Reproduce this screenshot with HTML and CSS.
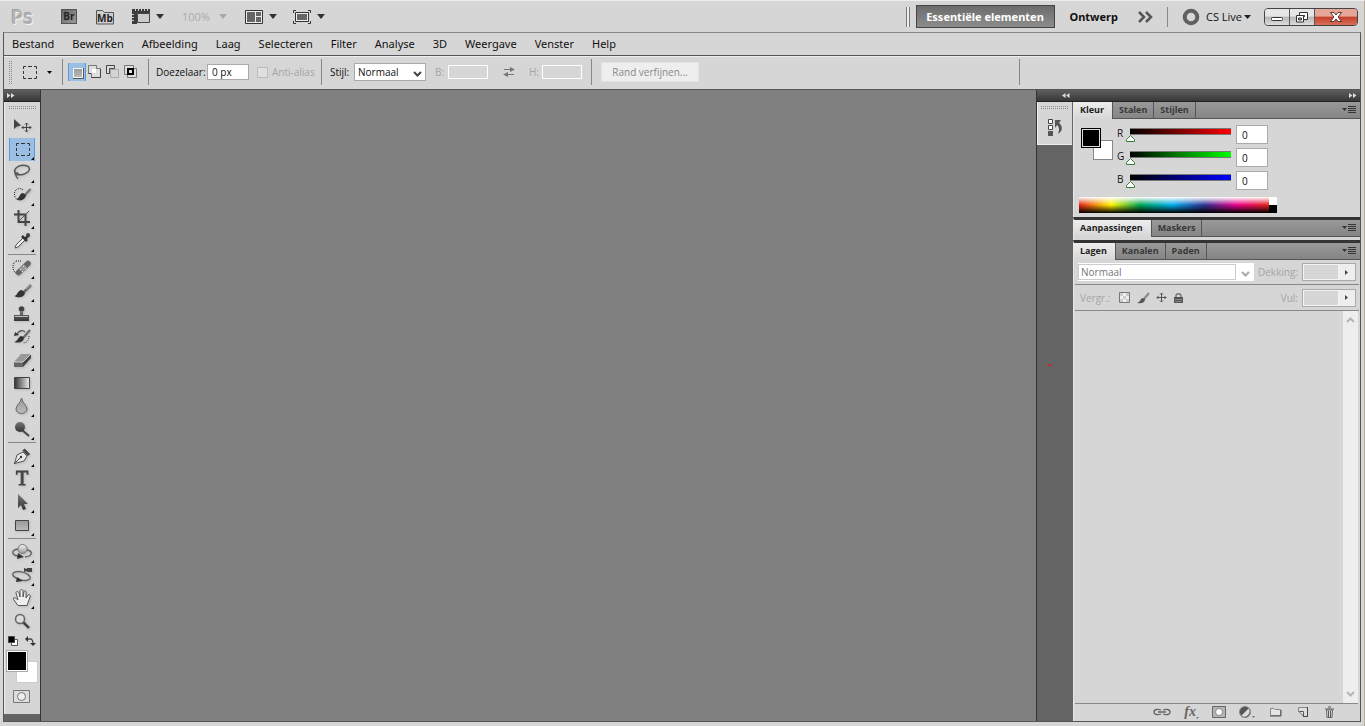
FILE: index.html
```html
<!DOCTYPE html>
<html lang="nl">
<head>
<meta charset="utf-8">
<title>Photoshop</title>
<link rel="stylesheet" href="styles.css">
</head>
<body>
<svg class="defs" aria-hidden="true">
  <defs>
    <linearGradient id="metal" x1="0" y1="0" x2="0" y2="1"><stop offset="0" stop-color="#777"/><stop offset="1" stop-color="#333"/></linearGradient>
    <linearGradient id="silver" x1="0" y1="0" x2="0" y2="1"><stop offset="0" stop-color="#f4f4f4"/><stop offset="1" stop-color="#9a9a9a"/></linearGradient>
    <linearGradient id="plate" x1="0" y1="0" x2="0" y2="1"><stop offset="0" stop-color="#999"/><stop offset="1" stop-color="#bbb"/></linearGradient>
    <linearGradient id="fade" x1="0" y1="0" x2="1" y2="0"><stop offset="0" stop-color="#333"/><stop offset="1" stop-color="#eee"/></linearGradient>
    <pattern id="dots" width="2" height="2" patternUnits="userSpaceOnUse"><path d="M0 0H1V1H0Z" fill="#8c8c8c"/></pattern>
  </defs>
</svg>

<header class="titlebar">
  <span class="logo">Ps</span>
  <button class="app-button bridge" aria-label="Bridge">Br</button>
  <button class="app-button mini" aria-label="Mini Bridge"><svg width="20" height="16" viewBox="0 0 20 16"><path d="M1.500 15V1.500H7.500L9.500 3.500H18.500V15Z" fill="#cfcfcf" stroke="#555"/></svg><span>Mb</span></button>
  <button class="icon-menu extras" aria-label="Extra's weergeven">
    <svg width="19" height="17" viewBox="0 0 19 17"><path d="M0 1H18V5H5V16H0Z" fill="#3c3c3c"/><path d="M3.500 1V3M6.500 1V3M9.500 1V3M12.500 1V3M15.500 1V3M0 6.500H2M0 9.500H2M0 12.500H2" stroke="#ccc"/><path d="M5.500 5.500H17.500V14.500H5.500Z" fill="#ccc" stroke="#444"/></svg>
    <svg class="caret" width="8" height="5" viewBox="0 0 8 5"><path d="M0 0H8L4 5Z" fill="#333"/></svg>
  </button>
  <button class="icon-menu zoom-level" disabled>100%
    <svg class="caret" width="8" height="5" viewBox="0 0 8 5"><path d="M0 0H8L4 5Z" fill="#aaa"/></svg>
  </button>
  <button class="icon-menu arrange" aria-label="Documenten schikken">
    <svg width="19" height="16" viewBox="0 0 19 16"><path d="M.5 1.500H17.500V14.500H.5Z" fill="#eee" stroke="#333"/><path d="M2 3H10V13H2ZM11 3H16V7H11ZM11 8H16V13H11Z" fill="#666"/></svg>
    <svg class="caret" width="8" height="5" viewBox="0 0 8 5"><path d="M0 0H8L4 5Z" fill="#333"/></svg>
  </button>
  <button class="icon-menu screen" aria-label="Schermmodus">
    <svg width="19" height="16" viewBox="0 0 19 16"><path d="M.5 4V1.500H3M15 1.500H17.500V4M.5 12V14.500H3M15 14.500H17.500V12" fill="none" stroke="#333"/><path d="M2.500 3.500H15.500V12.500H2.500Z" fill="#eee" stroke="#333"/><path d="M4 5H14V11H4Z" fill="#666"/></svg>
    <svg class="caret" width="8" height="5" viewBox="0 0 8 5"><path d="M0 0H8L4 5Z" fill="#333"/></svg>
  </button>
  <span class="spacer"></span>
  <span class="double-line"></span>
  <button class="workspace active">Essentiële elementen</button>
  <button class="workspace">Ontwerp</button>
  <button class="more" aria-label="Meer werkruimten"><svg width="15" height="12" viewBox="0 0 15 12"><path d="M1 1L6 6L1 11M8 1L13 6L8 11" fill="none" stroke="#555" stroke-width="2.500"/></svg></button>
  <span class="title-rule"></span>
  <button class="cs-live"><svg width="18" height="18" viewBox="0 0 18 18"><circle cx="9" cy="9" r="6.300" fill="none" stroke="#606060" stroke-width="4"/></svg><span>CS Live</span><svg width="7" height="4" viewBox="0 0 7 4"><path d="M0 0H7L3.500 4Z" fill="#222"/></svg></button>
  <div class="window-buttons">
    <button class="win" aria-label="Minimaliseren"><svg width="14" height="12" viewBox="0 0 14 12"><rect x="1.500" y="6.500" width="11" height="3" rx="1" fill="#fff" stroke="#333"/></svg></button>
    <button class="win" aria-label="Vorig formaat"><svg width="14" height="12" viewBox="0 0 14 12"><path d="M4.500 1.500H12.500V8.500H4.500Z" fill="#fff" stroke="#333"/><path d="M7 4H10V6H7Z" fill="#555"/><path d="M1.500 4.500H8.500V11H1.500Z" fill="#fff" stroke="#333"/><path d="M3.500 7H6.500V9H3.500Z" fill="#aaa" stroke="#333"/></svg></button>
    <button class="win close" aria-label="Sluiten"><svg width="14" height="12" viewBox="0 0 14 12"><path d="M1.500 1.500H5L7 4L9 1.500H12.500L9.200 6L12.500 10.500H9L7 8L5 10.500H1.500L4.800 6Z" fill="#fff" stroke="#533"/></svg></button>
  </div>
</header>

<div class="frame">
  <nav class="menubar">
    <button>Bestand</button><button>Bewerken</button><button>Afbeelding</button><button>Laag</button><button>Selecteren</button><button>Filter</button><button>Analyse</button><button>3D</button><button>Weergave</button><button>Venster</button><button>Help</button>
  </nav>

  <div class="options">
    <div class="group current">
      <svg class="grip-v" width="3" height="23"><rect width="3" height="23" fill="url(#dots)"/></svg>
      <button class="preset" aria-label="Rechthoekig selectiekader"><svg width="16" height="15" viewBox="0 0 16 15"><path d="M1.500 4V1.500H4M6 1.500H10M12 1.500H14.500V4M14.500 6V9M14.500 11V13.500H12M10 13.500H6M4 13.500H1.500V11M1.500 9V6" fill="none" stroke="#333"/></svg><svg width="5" height="3" viewBox="0 0 5 3"><path d="M0 0H5L2.500 3Z" fill="#000"/></svg></button>
    </div>
    <div class="group modes">
      <button class="mode selected" aria-label="Nieuwe selectie"><svg width="16" height="16" viewBox="0 0 16 16"><path d="M4.500 4.500H13.500V13.500H4.500Z" fill="url(#plate)" stroke="#f5f5f5"/><path d="M4 14.500H14.500V4" fill="none" stroke="#555"/></svg></button>
      <button class="mode" aria-label="Toevoegen"><svg width="16" height="16" viewBox="0 0 16 16"><path d="M1.500 1.500H9.500V4.500H13.500V13.500H4.500V9.500H1.500Z" fill="#ddd" stroke="#777"/><path d="M4 9.500H1.500M4.500 13.500H13.500V5" fill="none" stroke="#444"/><path d="M5 5H9V9H5Z" fill="#fff"/></svg></button>
      <button class="mode" aria-label="Verwijderen"><svg width="16" height="16" viewBox="0 0 16 16"><path d="M5.500 5.500H13.500V13.500H5.500Z" fill="#d4d4d4" stroke="#aaa"/><path d="M9.500 1.500H1.500V9.500H4.500V4.500H9.500Z" fill="#ddd" stroke="#444"/></svg></button>
      <button class="mode" aria-label="Doorsnede"><svg width="16" height="16" viewBox="0 0 16 16"><path d="M1.500 1.500H10.500V10.500H1.500ZM4.500 4.500H13.500V13.500H4.500Z" fill="#ddd" stroke="#777"/><path d="M5 5H10V10H5Z" fill="#ddd" stroke="#000" stroke-width="2"/></svg></button>
    </div>
    <div class="group feather">
      <label class="lab-feather" for="feather">Doezelaar:</label>
      <input class="box feather-box" id="feather" type="text" value="0 px">
      <label class="alias"><input type="checkbox" disabled>Anti-alias</label>
    </div>
    <div class="group style">
      <label class="lab-style" for="style">Stijl:</label>
      <span class="select-wrap style-select"><select id="style"><option>Normaal</option></select><svg width="9" height="6" viewBox="0 0 9 6"><path d="M1 1L4.500 4.500L8 1" fill="none" stroke="#444" stroke-width="2"/></svg></span>
      <label class="lab-dim" for="w">B:</label><input class="box dim" id="w" type="text" disabled>
      <button class="swap" disabled aria-label="Wisselen"><svg width="14" height="12" viewBox="0 0 14 12"><path d="M2 3.500H9M12 8.500H5" stroke="#777"/><path d="M8 1L13 3.500L8 6ZM6 6V11L1 8.500Z" fill="#777"/></svg></button>
      <label class="lab-dim" for="h">H:</label><input class="box dim" id="h" type="text" disabled>
    </div>
    <div class="group refine"><button class="refine-button" disabled>Rand verfijnen...</button></div>
  </div>

  <main class="work">
    <aside class="toolbar">
      <div class="dark-head"><svg width="8" height="5" viewBox="0 0 8 5"><path d="M0 0L3.500 2.500L0 5ZM4 0L7.500 2.500L4 5Z" fill="#ddd"/></svg></div>
      <div class="tools">
        <svg class="grip-h" width="28" height="3"><rect width="28" height="3" fill="url(#dots)"/></svg>
        <button class="tool plain" aria-label="Verplaatsen"><svg viewBox="0 0 26 23"><path d="M5 4V14L8 11.500L12 10.500Z" fill="#444"/><path d="M17.500 8V17M13 12.500H22M16 9.500L17.500 8L19 9.500M16 15.500L17.500 17L19 15.500M14.500 11L13 12.500L14.500 14M20.500 11L22 12.500L20.500 14" fill="none" stroke="#444"/></svg></button>
        <button class="tool selected" aria-label="Selectiekader"><svg viewBox="0 0 26 23"><path d="M7.500 8V5.500H10M12 5.500H16M18 5.500H20.500V8M20.500 10V13M20.500 15V17.500H18M16 17.500H12M10 17.500H7.500V15M7.500 13V10" fill="none" stroke="#333"/></svg></button>
        <button class="tool" aria-label="Lasso"><svg viewBox="0 0 26 23"><ellipse cx="13" cy="9" rx="7.500" ry="4.500" transform="rotate(-12 13 9)" fill="none" stroke="#555" stroke-width="1.500"/><path d="M7 11C4 14 9 15 9 13S6 12 7 15L9 18" fill="none" stroke="#555" stroke-width="1.300"/></svg></button>
        <button class="tool" aria-label="Snelle selectie"><svg viewBox="0 0 26 23"><path d="M14 6C11 3 6 5 5.500 9S7 16 11 16" fill="none" stroke="#222" stroke-dasharray="1 1"/><path d="M21.500 5L15 12" stroke="#777" stroke-width="2.500"/><path d="M17 11C16 17 10 17 7 15C11 15 10 9 14 9Z" fill="#333"/></svg></button>
        <button class="tool" aria-label="Uitsnijden"><svg viewBox="0 0 26 23"><path d="M9.500 3V15H21M5 7.500H16.500V19" fill="none" stroke="#444" stroke-width="2"/><path d="M10 14L20 4" stroke="#555"/></svg></button>
        <button class="tool" aria-label="Pipet"><svg viewBox="0 0 26 23"><path d="M6 18L7 15L14 8L16 10L9 17Z" fill="#eee" stroke="#555"/><path d="M13 6L18 11M16 9L20 5" stroke="#333" stroke-width="2.500"/><circle cx="19" cy="5" r="2" fill="#444"/></svg></button>
        <hr>
        <button class="tool" aria-label="Retoucheerpenseel"><svg viewBox="0 0 26 23"><path d="M12 4H7C3 6 3 14 7 16" fill="none" stroke="#222" stroke-dasharray="1 1"/><path d="M9.500 15.500L19 6.500" stroke="#666" stroke-width="5.500" stroke-linecap="round"/><path d="M11.500 13.500L16.500 9" stroke="#999" stroke-width="5"/><path d="M11 12.500H12M13 14.500H14M14 9.500H15M16 11.500H17" stroke="#ddd"/></svg></button>
        <button class="tool" aria-label="Penseel"><svg viewBox="0 0 26 23"><path d="M22 5L14 13" stroke="#666" stroke-width="2.500"/><path d="M22 5L17 9" stroke="#aaa"/><path d="M16 13C15 18 9 18 5 16C9 16 8 10 13 10Z" fill="#333"/></svg></button>
        <button class="tool" aria-label="Stempel"><svg viewBox="0 0 26 23"><circle cx="12.500" cy="6" r="2.800" fill="#444"/><path d="M11 8H14V12H20V18H5V12H11Z" fill="url(#metal)"/><path d="M6 13.500H19" stroke="#bbb"/></svg></button>
        <button class="tool" aria-label="Historiepenseel"><svg viewBox="0 0 26 23"><path d="M8 8C10 4 14 4 16 6" fill="none" stroke="#555" stroke-width="1.300"/><path d="M6 6L10 9L5 10Z" fill="#333"/><path d="M20 10C20 14 18 17 14 17" fill="none" stroke="#333" stroke-dasharray="1 1"/><path d="M21 4L14 12" stroke="#666" stroke-width="2"/><path d="M15 12C14 17 9 17 5 16C9 15 9 10 13 10Z" fill="#333"/></svg></button>
        <button class="tool" aria-label="Gummetje"><svg viewBox="0 0 26 23"><path d="M5 13L12 5H22L15 13Z" fill="#999"/><path d="M14 13L22 5V9L14 18Z" fill="#444"/><path d="M5 13H14V18H5Z" fill="#666"/><path d="M5 13H14L22 5" fill="none" stroke="#ccc"/></svg></button>
        <button class="tool" aria-label="Verloop"><svg viewBox="0 0 26 23"><path d="M5.500 5.500H20.500V16.500H5.500Z" fill="url(#fade)" stroke="#444"/></svg></button>
        <button class="tool" aria-label="Vervagen"><svg viewBox="0 0 26 23"><path d="M12.500 3C13 8 18 10 18 14C18 20 7 20 7 14C7 10 12 8 12.500 3Z" fill="url(#plate)" stroke="#666"/></svg></button>
        <button class="tool" aria-label="Tegenhouden"><svg viewBox="0 0 26 23"><path d="M13 12L20 18" stroke="#444" stroke-width="2"/><circle cx="11" cy="9" r="5" fill="url(#metal)"/></svg></button>
        <hr>
        <button class="tool" aria-label="Pen"><svg viewBox="0 0 26 23"><path d="M5.500 18.500L8 10L14 7L18 11L15 16Z" fill="#e8e8e8" stroke="#555"/><path d="M5 19L11 13" stroke="#444"/><circle cx="12" cy="12" r="1.200" fill="#333"/><path d="M14.500 4.500L20 10" stroke="#444" stroke-width="3"/></svg></button>
        <button class="tool type" aria-label="Tekst">T</button>
        <button class="tool" aria-label="Padselectie"><svg viewBox="0 0 26 23"><path d="M9 3V17L12 14L14 19L17 18L15 13H19Z" fill="url(#metal)"/></svg></button>
        <button class="tool" aria-label="Rechthoek"><svg viewBox="0 0 26 23"><path d="M6.500 6.500H19.500V16.500H6.500Z" fill="url(#plate)" stroke="#444"/></svg></button>
        <hr>
        <button class="tool" aria-label="3D roteren"><svg viewBox="0 0 26 23"><path d="M9 8C2 9 2 14 9 15M16 16C24 15 24 10 18 9" fill="none" stroke="#666" stroke-width="1.500"/><path d="M9 12L15 16L8 18Z" fill="#333"/><circle cx="13.500" cy="8" r="4.500" fill="url(#silver)" stroke="#777"/></svg></button>
        <button class="tool" aria-label="3D camera"><svg viewBox="0 0 26 23"><ellipse cx="12.500" cy="12" rx="9" ry="4" transform="rotate(14 12.500 12)" fill="none" stroke="#666" stroke-width="1.500"/><path d="M8 13L14 17L7 18Z" fill="#333"/><path d="M15 4L18 5V4H23V8H18V7L15 8Z" fill="#444"/></svg></button>
        <button class="tool" aria-label="Handje"><svg viewBox="0 0 26 23"><path d="M9 18.500L5 13C3 10 6 10 9 13L7 6C7 4 9 4 10 6L11 10V4C11 2 14 2 14 4V10L15 5C16 3 18 4 17 6L17 11L19 8C20 7 22 8 21 10L18 18.500Z" fill="#eee" stroke="#555"/></svg></button>
        <button class="tool plain" aria-label="Zoomen"><svg viewBox="0 0 26 23"><path d="M14 12L20 18" stroke="#444" stroke-width="2.500"/><circle cx="11" cy="9" r="4.500" fill="#ddd" stroke="#666" stroke-width="1.500"/></svg></button>
        <div class="mini-row">
          <button aria-label="Standaardkleuren"><svg width="11" height="11" viewBox="0 0 11 11"><path d="M3.500 3.500H9.500V9.500H3.500Z" fill="#fff" stroke="#555"/><path d="M.5 .5H6.500V6.500H.5Z" fill="#000" stroke="#444"/></svg></button>
          <button aria-label="Kleuren omwisselen"><svg width="11" height="11" viewBox="0 0 11 11"><path d="M2 3H5C7 3 8 4 8 8" fill="none" stroke="#444" stroke-width="1.300"/><path d="M0 3L3 0V6ZM5 7H11L8 10Z" fill="#333"/></svg></button>
        </div>
        <div class="swatches"><button class="back" aria-label="Achtergrondkleur"></button><button class="front" aria-label="Voorgrondkleur"></button></div>
        <button class="mask" aria-label="Snelmasker"><svg width="17" height="13" viewBox="0 0 17 13"><path d="M.5 .5H16.500V12.500H.5Z" fill="#ddd" stroke="#777"/><circle cx="8.500" cy="6.500" r="4" fill="#eee" stroke="#777"/></svg></button>
      </div>
    </aside>

    <section class="canvas"></section>

    <aside class="dock">
      <div class="dock-head"><svg width="8" height="5" viewBox="0 0 8 5"><path d="M3.500 0L0 2.500L3.500 5ZM7.500 0L4 2.500L7.500 5Z" fill="#ddd"/></svg><svg width="8" height="5" viewBox="0 0 8 5"><path d="M0 0L3.500 2.500L0 5ZM4 0L7.500 2.500L4 5Z" fill="#ddd"/></svg></div>
      <div class="dock-body">
        <div class="icon-column">
          <div class="icon-panel"><svg class="grip-h" width="28" height="3"><rect width="28" height="3" fill="url(#dots)"/></svg><button aria-label="Historie"><svg width="17" height="19" viewBox="0 0 17 19"><path d="M1.500 1.500H5.500V5.500H1.500ZM1.500 7.500H5.500V11.500H1.500Z" fill="#fff" stroke="#444"/><path d="M1 13H6V18H1Z" fill="#555"/><path d="M8 2H14L12 5C16 8 16 13 11 16C13 11 12 9 10 7L8 10Z" fill="#555"/></svg></button></div>
          <svg class="red-dot" width="3" height="2" viewBox="0 0 3 2"><path d="M0 0H3V2H0Z" fill="#d22"/></svg>
        </div>
        <div class="panels">
          <section class="panel color-panel">
            <div class="tabs"><button class="tab on">Kleur</button><button class="tab">Stalen</button><button class="tab">Stijlen</button><button class="panel-menu" aria-label="Menu"><svg width="14" height="8" viewBox="0 0 14 8"><path d="M0 2H5L2.500 5Z" fill="#333"/><path d="M6 .5H14M6 2.500H14M6 4.500H14M6 6.500H14" stroke="#333"/></svg></button></div>
            <div class="color-body">
              <div class="mixer">
                <div class="pair"><button class="pair-back" aria-label="Achtergrond"></button><button class="pair-front" aria-label="Voorgrond"></button></div>
                <div class="channels">
                  <label for="r">R</label><input class="range red" id="r" type="range" min="0" max="255" value="0"><input class="value" type="text" value="0" aria-label="R-waarde">
                  <label for="g">G</label><input class="range green" id="g" type="range" min="0" max="255" value="0"><input class="value" type="text" value="0" aria-label="G-waarde">
                  <label for="b">B</label><input class="range blue" id="b" type="range" min="0" max="255" value="0"><input class="value" type="text" value="0" aria-label="B-waarde">
                </div>
              </div>
              <div class="ramp"><span class="spectrum"></span><span class="mono"></span></div>
            </div>
          </section>
          <section class="panel">
            <div class="tabs"><button class="tab on">Aanpassingen</button><button class="tab">Maskers</button><button class="panel-menu" aria-label="Menu"><svg width="14" height="8" viewBox="0 0 14 8"><path d="M0 2H5L2.500 5Z" fill="#333"/><path d="M6 .5H14M6 2.500H14M6 4.500H14M6 6.500H14" stroke="#333"/></svg></button></div>
            <div class="collapsed"></div>
          </section>
          <section class="panel layers">
            <div class="tabs"><button class="tab on">Lagen</button><button class="tab">Kanalen</button><button class="tab">Paden</button><button class="panel-menu" aria-label="Menu"><svg width="14" height="8" viewBox="0 0 14 8"><path d="M0 2H5L2.500 5Z" fill="#333"/><path d="M6 .5H14M6 2.500H14M6 4.500H14M6 6.500H14" stroke="#333"/></svg></button></div>
            <div class="layer-row">
              <span class="select-wrap blend"><select disabled aria-label="Overvloeimodus"><option>Normaal</option></select><svg width="9" height="6" viewBox="0 0 9 6"><path d="M1 1L4.500 4.500L8 1" fill="none" stroke="#aaa" stroke-width="2"/></svg></span>
              <label class="faint" for="opacity">Dekking:</label>
              <span class="stepper"><input id="opacity" type="text" disabled><button disabled aria-label="Dekking kiezen"><svg width="4" height="7" viewBox="0 0 4 7"><path d="M0 1L3 3.500L0 6Z" fill="#444"/></svg></button></span>
            </div>
            <div class="layer-row">
              <span class="faint lock-label">Vergr.:</span>
              <button class="lock" disabled aria-label="Transparantie"><svg width="12" height="12" viewBox="0 0 12 12"><path d="M.5 .5H10.500V10.500H.5Z" fill="#eee" stroke="#777"/><path d="M1 1H4V4H1ZM7 1H10V4H7ZM4 4H7V7H4ZM1 7H4V10H1ZM7 7H10V10H7Z" fill="#ccc"/></svg></button>
              <button class="lock" disabled aria-label="Pixels"><svg width="13" height="12" viewBox="0 0 13 12"><path d="M12 1L7 7" stroke="#888" stroke-width="2"/><path d="M8 7C8 11 4 12 0 11C4 10 3 6 6 6Z" fill="#555"/></svg></button>
              <button class="lock" disabled aria-label="Positie"><svg width="11" height="11" viewBox="0 0 11 11"><path d="M5.500 1V10M1 5.500H10M4 2.500L5.500 1L7 2.500M4 8.500L5.500 10L7 8.500M2.500 4L1 5.500L2.500 7M8.500 4L10 5.500L8.500 7" fill="none" stroke="#555"/></svg></button>
              <button class="lock" disabled aria-label="Alles"><svg width="12" height="12" viewBox="0 0 12 12"><path d="M3 6V4C3 1 8 1 8 4V6" fill="none" stroke="#777" stroke-width="1.500"/><path d="M1 5H10V11H1Z" fill="#555"/><path d="M2 7.500H9M2 9.500H9" stroke="#888"/></svg></button>
              <label class="faint fill-label" for="fill">Vul:</label>
              <span class="stepper"><input id="fill" type="text" disabled><button disabled aria-label="Vulling kiezen"><svg width="4" height="7" viewBox="0 0 4 7"><path d="M0 1L3 3.500L0 6Z" fill="#444"/></svg></button></span>
            </div>
            <div class="layer-list"><div class="scroll"><svg width="9" height="6" viewBox="0 0 9 6"><path d="M1 5L4.500 1.500L8 5" fill="none" stroke="#b5b5b5" stroke-width="2"/></svg><svg width="9" height="6" viewBox="0 0 9 6"><path d="M1 1L4.500 4.500L8 1" fill="none" stroke="#b5b5b5" stroke-width="2"/></svg></div></div>
            <div class="layer-foot">
              <button aria-label="Koppelen"><svg width="18" height="12" viewBox="0 0 18 12"><path d="M8 4C5 3 1 3 1 6S5 9 8 8M10 4C13 3 17 3 17 6S13 9 10 8M5 6H13" fill="none" stroke="#666" stroke-width="1.300"/></svg></button>
              <button class="fx" aria-label="Laagstijl">fx<svg width="3" height="2" viewBox="0 0 3 2"><path d="M0 0H3L1.500 2Z" fill="#777"/></svg></button>
              <button aria-label="Laagmasker"><svg width="14" height="12" viewBox="0 0 14 12"><path d="M.5 .5H13.500V11.500H.5Z" fill="#b4b4b4" stroke="#666"/><circle cx="7" cy="6" r="3.500" fill="#fff" stroke="#888"/></svg></button>
              <button aria-label="Aanpassingslaag"><svg width="16" height="12" viewBox="0 0 16 12"><circle cx="6" cy="6" r="5.500" fill="#555" stroke="#888"/><path d="M2.500 9.500L9.500 2.500A5 5 0 0 1 2.500 9.500Z" fill="#ddd"/><path d="M13 10H16L14.500 12Z" fill="#777"/></svg></button>
              <button aria-label="Nieuwe groep"><svg width="12" height="12" viewBox="0 0 12 12"><path d="M.5 2.500H4L5 3.500H10.500V9.500H.5Z" fill="#e4e4e4" stroke="#888"/><path d="M0 10H11V4" fill="none" stroke="#555"/></svg></button>
              <button aria-label="Nieuwe laag"><svg width="12" height="12" viewBox="0 0 12 12"><path d="M1.500 6V1.500H10.500V10.500H6" fill="#ddd" stroke="#888"/><path d="M10.500 1V10.500H6" fill="none" stroke="#444"/><path d="M2.500 5.500H6.500V10L2.500 6Z" fill="#eee" stroke="#555"/></svg></button>
              <button aria-label="Verwijderen"><svg width="12" height="12" viewBox="0 0 12 12"><path d="M2.500 4H8.500L8 11.500H3Z" fill="#ddd" stroke="#666"/><path d="M1 3H10M4 1H7M4.500 5V11M6.500 5V11" stroke="#555"/></svg></button>
            </div>
          </section>
        </div>
      </div>
    </aside>
  </main>
</div>
</body>
</html>
```
FILE: styles.css
```css
* { box-sizing: border-box; }
html, body { height: 100%; }
body {
  margin: 0;
  display: flex;
  flex-direction: column;
  overflow: hidden;
  background: #d6d6d6;
  border-top: 1px solid #eee;
  border-right: 1px solid #b5ab96;
  font: 10px/14px "Open Sans", "Noto Sans", sans-serif;
  color: #111;
}
button, input, select { font: inherit; color: inherit; margin: 0; }
button { padding: 0; border: 0; background: none; display: block; flex: none; }
svg { display: block; flex: none; }
.defs { position: absolute; width: 0; height: 0; }

/* Title bar */
.titlebar { height: 31px; flex: none; display: flex; align-items: center; padding: 0 6px 0 11px; }
.logo { width: 50px; font: 600 20px/24px "Open Sans", sans-serif; color: #b4b4b4; text-shadow: 1px 1px 0 #f4f4f4, -1px -1px 0 #a0a0a0; }
.app-button { font-weight: 700; color: #222; }
.bridge { width: 16px; height: 15px; background: linear-gradient(135deg, #666, #999); border: 1px solid #555; line-height: 13px; }
.mini { display: grid; margin-left: 18px; place-items: center; }
.mini > * { grid-area: 1 / 1; }
.mini span { line-height: 14px; padding-top: 2px; }
.icon-menu { display: flex; align-items: center; gap: 5px; }
.extras { margin-left: 17px; }
.zoom-level { margin-left: 18px; width: 45px; justify-content: space-between; font-size: 11px; color: #aaa; }
.arrange { margin-left: 18px; }
.screen { margin-left: 16px; }
.spacer { flex: 1; }
.double-line { width: 4px; height: 20px; border: solid #777; border-width: 0 1px; background: #eee; margin-right: 6px; }
.workspace { height: 23px; padding: 0 8px; font: bold 11px/16px "Noto Sans", sans-serif; }
.workspace.active { width: 139px; padding: 0; color: #fff; background: linear-gradient(#6c6c6c, #8c8c8c); border: 1px solid #444; margin-right: 7px; }
.more { margin: 0 14px 0 12px; }
.title-rule { width: 1px; height: 20px; background: #888; margin-right: 14px; }
.cs-live { display: flex; align-items: center; gap: 2px; font-size: 11px; margin-right: 13px; }
.cs-live span { padding-left: 4px; }
.window-buttons { display: flex; border: 1px solid #444; border-radius: 4px; overflow: hidden; }
.win { width: 25px; height: 16px; display: grid; place-items: center; background: linear-gradient(#e6e6e6 45%, #b6b6b6 50%, #ddd); border-right: 1px solid #555; }
.win.close { width: 42px; border: 0; background: linear-gradient(#e5a698 45%, #c6402a 50%, #d87058); }

/* Frame and menu */
.frame { flex: 1; min-height: 0; display: flex; flex-direction: column; margin: 0 3px 4px 3px; border: 1px solid #555; border-top-color: #888; }
.menubar { height: 23px; flex: none; display: flex; align-items: center; gap: 18px; padding: 0 8px; border-bottom: 1px solid #555; font: 11px/16px "Noto Sans", sans-serif; }

/* Options bar */
.options { height: 34px; flex: none; display: flex; border-top: 1px solid #eee; border-bottom: 1px solid #555; padding-bottom: 2px; }
.group { display: flex; align-items: center; flex: none; position: relative; }
.group::after { content: ""; position: absolute; right: 0; top: 2px; bottom: 2px; border-right: 1px solid #888; }
.current { width: 59px; padding-left: 5px; }
.grip-v { margin-right: 10px; }
.preset { display: flex; align-items: center; gap: 9px; }
.modes { width: 86px; padding-left: 5px; }
.mode { width: 18px; height: 18px; display: grid; place-items: center; }
.mode.selected { background: #9bbfe4; border: solid #5a9ad8; border-width: 0 1px; }
.feather { width: 173px; padding-left: 7px; }
.lab-feather { width: 51px; white-space: nowrap; }
.box { height: 16px; padding: 0 4px; border: 1px solid #aaa; background: #fff; }
.feather-box { width: 42px; }
.alias { display: flex; align-items: center; gap: 4px; margin-left: 8px; color: #a5a5a5; }
.alias input { appearance: none; width: 11px; height: 11px; margin: 0; border: 1px solid #bbb; background: #e0e0e0; }
.style { width: 270px; padding-left: 8px; }
.lab-style { width: 24px; }
.select-wrap { display: grid; align-items: center; background: #fff; }
.select-wrap > * { grid-area: 1 / 1; }
.select-wrap select { appearance: none; width: 100%; height: 18px; border: 1px solid #aaa; border-radius: 0; padding: 0 3px; background: transparent; opacity: 1; }
.select-wrap svg { justify-self: end; margin-right: 4px; margin-top: 4px; pointer-events: none; }
.style-select { width: 72px; }
.lab-dim { width: 13px; margin-left: 9px; color: #a5a5a5; }
.box.dim { width: 40px; height: 14px; border-color: #fff; background: #d6d6d6; }
.swap { margin: 0 4px 0 14px; }
.refine { width: 428px; padding-left: 9px; }
.refine-button { width: 98px; height: 20px; background: #eee; border: 1px solid #e2e2e2; color: #888; }

/* Work area */
.work { flex: 1; min-height: 0; display: flex; background: #646464; }
.toolbar { width: 37px; flex: none; border-right: 1px solid #333; }
.dark-head, .dock-head { height: 12px; background: linear-gradient(#5e5e5e, #383838); border-bottom: 1px solid #222; display: flex; align-items: center; padding: 0 3px; }
.tools { background: #d6d6d6; border-left: 1px solid #eee; padding: 4px 3px 11px 4px; }
.grip-h { margin-bottom: 6px; }
.tool { width: 26px; height: 23px; position: relative; filter: drop-shadow(1px 1px 1px #bbb); }
.tool svg { width: 26px; height: 23px; }
.tool::after { content: ""; position: absolute; right: 1px; bottom: 1px; width: 3px; height: 3px; background: #000; clip-path: polygon(100% 0, 100% 100%, 0 100%); }
.tool.plain::after { display: none; }
.tool.selected { background: #9bbfe4; filter: none; box-shadow: inset 1px 0 #5a9ad8, inset -1px 0 #5a9ad8; }
.tool.type { font: 20px/18px "Liberation Serif", serif; color: #444; padding-bottom: 3px; -webkit-text-stroke: 1px #444; }
.tools hr { height: 1px; margin: 1px 1px 2px -1px; border: 0; background: #888; }
.mini-row { display: flex; justify-content: space-between; padding-top: 3px; margin: 0 1px 0 -1px; }
.swatches { display: grid; margin: 4px -1px 7px -2px; height: 32px; }
.swatches button { grid-area: 1 / 1; }
.swatches .front { width: 20px; height: 20px; background: #000; border: 1px solid #fff; outline: 1px solid #aaa; }
.swatches .back { width: 22px; height: 22px; background: #fff; border: 1px solid #ccc; align-self: end; justify-self: end; }
.mask { margin-left: 4px; }
.canvas { flex: 1; background: #808080; }

/* Dock */
.dock { width: 324px; flex: none; display: flex; flex-direction: column; border-left: 1px solid #333; }
.dock-head { flex: none; justify-content: space-between; padding: 0 3px 0 25px; }
.dock-body { flex: 1; min-height: 0; display: flex; }
.icon-column { width: 36px; flex: none; }
.icon-panel { width: 35px; height: 43px; padding: 4px 3px; background: #d6d6d6; border: solid #eee; border-width: 0 0 1px 1px; }
.icon-panel button { margin-left: 6px; margin-top: 9px; }
.red-dot { margin: 219px 0 0 11px; }
.panels { flex: 1; min-width: 0; display: flex; flex-direction: column; }
.panel { background: #d6d6d6; border-left: 1px solid #e8e8e8; flex: none; }
.panel + .panel { border-top: 3px solid #333; }
.tabs { height: 17px; display: flex; background: linear-gradient(#999, #858585); border-bottom: 1px solid #555; }
.tab { height: 17px; padding: 0 6px; font-size: 9px; line-height: 15px; padding-bottom: 2px; font-weight: 700; color: #383838; border-right: 1px solid #555; }
.tab.on { padding-right: 8px; background: linear-gradient(#eee, #d6d6d6); color: #222; }
.panel-menu { margin: 4px 4px 0 auto; height: 8px; }
.color-body { height: 98px; padding: 6px 5px 3px; }
.mixer { display: flex; height: 72px; }
.pair { width: 32px; height: 32px; margin: 3px 4px 0 2px; display: grid; }
.pair button { grid-area: 1 / 1; }
.pair-front { width: 20px; height: 20px; background: #000; border: 1px solid #000; box-shadow: inset 0 0 0 1px #ddd; }
.pair-back { width: 20px; height: 20px; background: #fff; border: 1px solid #888; align-self: end; justify-self: end; }
.channels { display: grid; grid-template-columns: 8px 111px 32px; grid-auto-rows: 23px; }
.channels label { line-height: 16px; }
.range { appearance: none; width: 111px; height: 20px; background: none; padding: 0; }
.range::-webkit-slider-runnable-track { height: 14px; margin: 0 5px; background: linear-gradient(90deg, #000, var(--hue)) 0 0 / 100% 5px no-repeat, linear-gradient(#777, #777) 0 0 / 100% 6px no-repeat; border-top: 1px solid #777; }
.range::-webkit-slider-thumb { appearance: none; width: 9px; height: 7px; margin: 6px 0 0 -4px; background: url("data:image/svg+xml,%3Csvg xmlns='http://www.w3.org/2000/svg' width='9' height='7'%3E%3Cpath d='M4.500 .500L8.500 4.500V6.500H.500V4.500Z' fill='white' stroke='%23367c36'/%3E%3C/svg%3E"); }
.red { --hue: #f00; }
.green { --hue: #0f0; }
.blue { --hue: #00f; }
.value { width: 32px; height: 19px; padding: 0 5px; border: 1px solid #aaa; background: #fff; }
.ramp { display: flex; width: 198px; height: 16px; }
.spectrum { flex: 1; background: linear-gradient(#fff, transparent 50%, #000), linear-gradient(90deg, #e2231a, #fff200 17%, #00a550 32%, #00aeef 49%, #2e3192 66%, #ec008c 83%, #e2231a); }
.mono { width: 8px; background: linear-gradient(#fff 50%, #000 50%); }
.collapsed { height: 3px; }
.layers { flex: 1; min-height: 0; display: flex; flex-direction: column; }
.layers .tabs { flex: none; }
.layer-row { height: 25px; flex: none; display: flex; align-items: center; margin: 0 1px; padding: 0 3px; border-bottom: 1px solid #888; }
.layer-row + .layer-row { height: 26px; }
.blend { width: 176px; margin-right: 4px; }
.blend select { height: 16px; width: 158px; margin: 1px 0; padding: 0 2px; border-color: #ccc; color: #777; }
.faint { color: #a5a5a5; white-space: nowrap; }
.stepper { display: flex; width: 54px; height: 18px; margin-left: auto; border: 1px solid #aaa; background: #eee; }
.stepper input { width: 36px; border: 1px solid #f4f4f4; background: #d6d6d6; padding: 0; }
.stepper button { flex: 1; display: grid; place-items: center; }
.lock-label { width: 39px; margin-left: 2px; }
.lock { margin-right: 6px; }
.fill-label { margin-left: auto; margin-right: 4px; }
.fill-label + .stepper { margin-left: 0; }
.layer-list { flex: 1; display: flex; justify-content: flex-end; margin: 0 2px 0 1px; border-bottom: 1px solid #888; }
.scroll { width: 15px; display: flex; flex-direction: column; justify-content: space-between; align-items: center; padding: 6px 0; background: #eee; }
.layer-foot { height: 17px; flex: none; display: flex; align-items: center; justify-content: flex-end; gap: 13px; padding: 0 24px 2px 0; }
.layer-foot button:nth-child(n+5) { margin-left: 2px; }
.fx { display: flex; align-items: flex-end; font: italic bold 14px/14px "Liberation Serif", serif; color: #666; }
```
